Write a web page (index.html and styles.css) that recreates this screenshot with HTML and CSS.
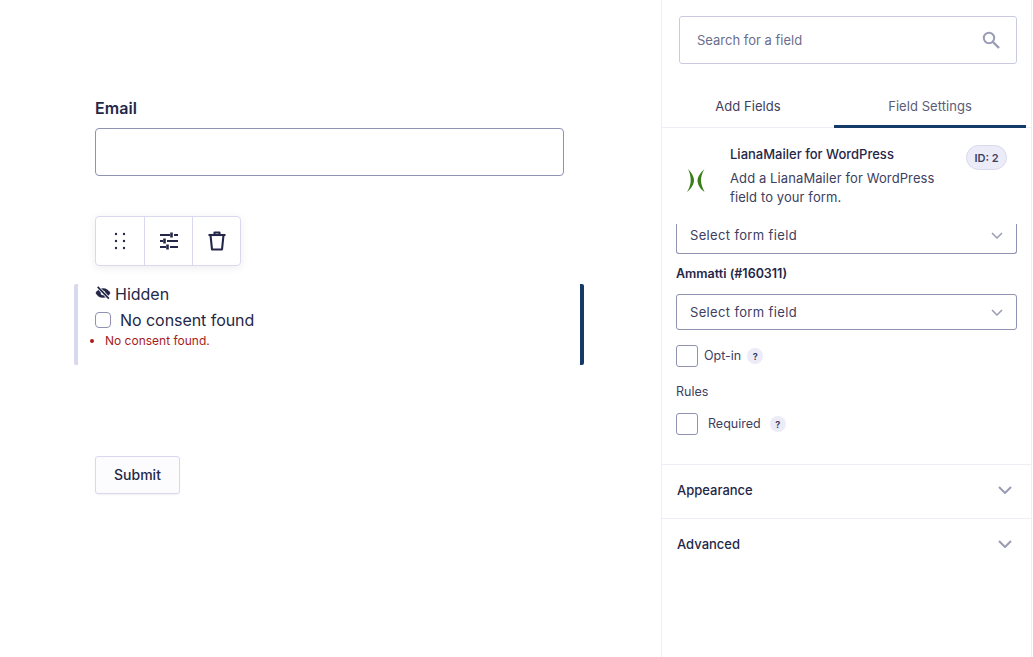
FILE: index.html
```html
<!DOCTYPE html>
<html lang="en">
<head>
<meta charset="utf-8">
<title>Form editor</title>
<link rel="stylesheet" href="styles.css">
</head>
<body>
<main class="canvas">
  <div class="email">
    <label class="email-label">Email</label>
    <div class="email-input"></div>
  </div>
  <div class="toolbar">
    <div class="tool tool-first">
      <svg width="12" height="18" viewBox="0 0 12 18"><g fill="#242748"><circle cx="2" cy="2" r="1.2"/><circle cx="10" cy="2" r="1.2"/><circle cx="2" cy="9" r="1.2"/><circle cx="10" cy="9" r="1.2"/><circle cx="2" cy="16" r="1.2"/><circle cx="10" cy="16" r="1.2"/></g></svg>
    </div>
    <div class="tool">
      <svg width="20" height="18" viewBox="0 0 20 18" fill="none" stroke="#242748" stroke-width="1.8"><path d="M1 3h10M15 3h4M1 9h3M8 9h11M1 15h6M11 15h8"/><path d="M12.500 .5v5M5.500 6.500v5M8.500 12.500v5" stroke-width="2.600"/></svg>
    </div>
    <div class="tool">
      <svg width="18" height="20" viewBox="0 0 18 20" fill="none" stroke="#242748" stroke-width="2.100" stroke-linejoin="round"><path d="M.5 4h17"/><path d="M6.500 3.500V1.500h5v2"/><path d="M2.500 4l1.500 14.500h10L15.500 4"/></svg>
    </div>
  </div>
  <div class="field">
    <div class="hidden-row">
      <svg class="eye" width="16" height="14" viewBox="0 0 15 13"><path d="M7.500 2C4.300 2 1.700 4 .5 6.500 1.700 9 4.300 11 7.500 11s5.800-2 7-4.500C13.300 4 10.700 2 7.500 2z" fill="#242748"/><circle cx="7.500" cy="6.500" r="2.200" fill="#fff"/><path d="M2.500 .8l10.500 11" stroke="#fff" stroke-width="3"/><path d="M2.500 .8l10.500 11" stroke="#242748" stroke-width="1.600"/></svg>
      <span>Hidden</span>
    </div>
    <div class="consent-row">
      <span class="consent-box"></span>
      <span>No consent found</span>
    </div>
    <ul class="errors"><li>No consent found.</li></ul>
  </div>
  <button class="submit" type="button">Submit</button>
</main>
<aside class="sidebar">
  <div class="search">
    <span>Search for a field</span>
    <svg width="18" height="18" viewBox="0 0 18 18" fill="none" stroke="#9a9cb5" stroke-width="2"><circle cx="7" cy="7" r="5.200"/><path d="M11 11l6 6" stroke-width="2.400"/></svg>
  </div>
  <div class="tabs">
    <div class="tab">Add Fields</div>
    <div class="tab tab-active">Field Settings</div>
  </div>
  <div class="field-info">
    <svg class="logo" width="18" height="23" viewBox="0 0 18 23"><path d="M1 0C5 4 7 8 7 11.500 7 15 4 20 0 23 2.500 19 3.700 15 3.700 11.500 3.700 8 3 4 1 0z" fill="#3a7d1a"/><path d="M17.500 0C13 4 10.500 8 10.500 11.500 10.500 15 13 20 17.500 23 15.500 19 14 15 14 11.500 14 8 15 4 17.500 0z" fill="#3a7d1a"/></svg>
    <div class="info-text">
      <div class="info-title">LianaMailer for WordPress</div>
      <div class="info-desc">Add a LianaMailer for WordPress field to your form.</div>
    </div>
    <span class="id-badge">ID: 2</span>
  </div>
  <div class="settings">
    <div class="select select-clipped">
      <span>Select form field</span>
      <svg width="12" height="7" viewBox="0 0 12 7" fill="none" stroke="#9a9cb5" stroke-width="1.500"><path d="M1 1l5 5 5-5"/></svg>
    </div>
    <div class="settings-label">Ammatti (#160311)</div>
    <div class="select">
      <span>Select form field</span>
      <svg width="12" height="7" viewBox="0 0 12 7" fill="none" stroke="#9a9cb5" stroke-width="1.500"><path d="M1 1l5 5 5-5"/></svg>
    </div>
    <div class="check-row check-optin">
      <span class="check"></span>
      <span class="check-text">Opt-in</span>
      <span class="help">?</span>
    </div>
    <div class="rules">Rules</div>
    <div class="check-row check-required">
      <span class="check"></span>
      <span class="check-text">Required</span>
      <span class="help">?</span>
    </div>
  </div>
  <div class="section">
    <span>Appearance</span>
    <svg width="14" height="8" viewBox="0 0 14 8" fill="none" stroke="#9a9cb5" stroke-width="2"><path d="M1 1l6 6 6-6"/></svg>
  </div>
  <div class="section">
    <span>Advanced</span>
    <svg width="14" height="8" viewBox="0 0 14 8" fill="none" stroke="#9a9cb5" stroke-width="2"><path d="M1 1l6 6 6-6"/></svg>
  </div>
</aside>
</body>
</html>
```
FILE: styles.css
```css
* { box-sizing: border-box; }
html, body { margin: 0; height: 657px; overflow: hidden; background: #fff; }
body {
  display: flex;
  font-family: Inter, "Liberation Sans", sans-serif;
  color: #242748;
}
.canvas { width: 661px; flex: none; padding: 98px 0 0 95px; }
.email { width: 469px; }
.email-label { display: block; font-size: 16px; font-weight: 600; line-height: 20px; margin-bottom: 10px; letter-spacing: .05px; }
.email-input { height: 48px; border: 1px solid #9092b2; border-radius: 4px; }
.toolbar {
  display: flex;
  width: 146px;
  height: 50px;
  margin-top: 40px;
  border: 1px solid #d8d9ee;
  border-radius: 4px;
  box-shadow: 0 2px 8px rgba(36, 39, 72, 0.08);
}
.tool { width: 48px; display: flex; align-items: center; justify-content: center; border-left: 1px solid #d8d9ee; }
.tool-first { border-left: 0; }
.field {
  width: 510px;
  height: 81px;
  margin: 18px 0 0 -21px;
  padding: 0 0 0 17px;
  border-left: 4px solid #d8d9ee;
  border-right: 4px solid #143a66;
  border-radius: 2px;
}
.hidden-row { display: flex; align-items: center; height: 20px; font-size: 16px; line-height: 20px; gap: 4px; }
.eye { margin-top: -3px; }
.consent-row { display: flex; align-items: center; font-size: 16px; line-height: 20px; margin-top: 6px; gap: 9px; letter-spacing: -.05px; }
.consent-box { width: 16px; height: 16px; border: 1px solid #9092b2; border-radius: 4px; flex: none; }
.errors { margin: 3px 0 0; padding: 0 0 0 10px; font-size: 12px; line-height: 16px; color: #a81c1c; }
.submit {
  display: block;
  width: 85px;
  height: 38px;
  margin-top: 91px;
  padding: 0 0 2px;
  background: #fcfcff;
  border: 1px solid #d8d9ee;
  border-radius: 3px;
  box-shadow: 0 1px 2px rgba(36, 39, 72, 0.06);
  font: 500 14px Inter, "Liberation Sans", sans-serif;
  color: #242748;
}
.sidebar { width: 371px; flex: none; border-left: 1px solid #eeeef7; border-right: 1px solid #eeeef7; height: 657px; overflow: hidden; }
.search {
  display: flex;
  align-items: center;
  justify-content: space-between;
  height: 48px;
  margin: 16px 14px 0 17px;
  padding: 0 16px 0 17px;
  border: 1px solid #c9cae0;
  border-radius: 3px;
  font-size: 13px;
  color: #6b6d8c;
}
.tabs { display: flex; height: 48px; margin-top: 16px; padding-right: 5px; box-shadow: inset 0 -1px 0 #eeeef7; }
.tab { width: 172px; padding-top: 18px; font-size: 13px; line-height: 16px; text-align: center; font-weight: 400; letter-spacing: .05px; color: #3d4060; }
.tab-active { width: 192px; border-bottom: 3px solid #143a66; color: #5a5c78; }
.field-info { display: flex; height: 96px; padding: 17px 0 0 25px; position: relative; }
.logo { flex: none; margin: 24px 0 0 0; }
.info-text { margin-left: 25px; width: 220px; }
.info-title { font-size: 13px; line-height: 18px; font-weight: 500; margin-bottom: 6px; }
.info-desc { font-size: 13px; line-height: 19px; color: #3d4060; letter-spacing: .1px; }
.id-badge {
  position: absolute;
  top: 17px;
  left: 304px;
  width: 41px;
  height: 25px;
  display: flex;
  align-items: center;
  justify-content: center;
  background: #ececf8;
  border: 1px solid #d8d9ee;
  border-radius: 13px;
  font-size: 11px;
  font-weight: 600;
  color: #3d4060;
}
.settings { height: 241px; padding: 0 14px; border-bottom: 1px solid #eeeef7; }
.select {
  display: flex;
  align-items: center;
  justify-content: space-between;
  height: 36px;
  padding: 0 13px;
  border: 1px solid #9092b2;
  border-radius: 3px;
  font-size: 13px;
  letter-spacing: .35px;
  color: #3d4060;
}
.select-clipped { height: 30px; border-top: 0; border-radius: 0 0 3px 3px; padding-top: 2px; padding-bottom: 0; align-items: flex-start; line-height: 18px; }
.select-clipped svg { margin-top: 6px; }
.settings-label { font-size: 12.500px; font-weight: 600; line-height: 16px; margin: 12px 0 12px; }
.check-row { display: flex; align-items: center; font-size: 12.500px; color: #3d4060; }
.check-optin { margin-top: 15px; gap: 6px; }
.check-required { margin-top: 13px; gap: 10px; }
.check { width: 22px; height: 22px; border: 1px solid #9092b2; border-radius: 3px; flex: none; }
.check-text { line-height: 16px; }
.help {
  width: 16px; height: 16px; border-radius: 50%; background: #ececf8;
  display: flex; align-items: center; justify-content: center;
  font-size: 9px; font-weight: 700; color: #3d4060; margin-left: 0;
}
.check-required .help { margin-left: -1px; }
.rules { font-size: 12.500px; line-height: 16px; margin-top: 17px; color: #3d4060; }
.section {
  display: flex;
  align-items: center;
  justify-content: space-between;
  height: 54px;
  padding: 0 19px 4px 15px;
  border-bottom: 1px solid #eeeef7;
  font-size: 13px;
  font-weight: 500;
}
.section:last-child { border-bottom: 0; }
```
